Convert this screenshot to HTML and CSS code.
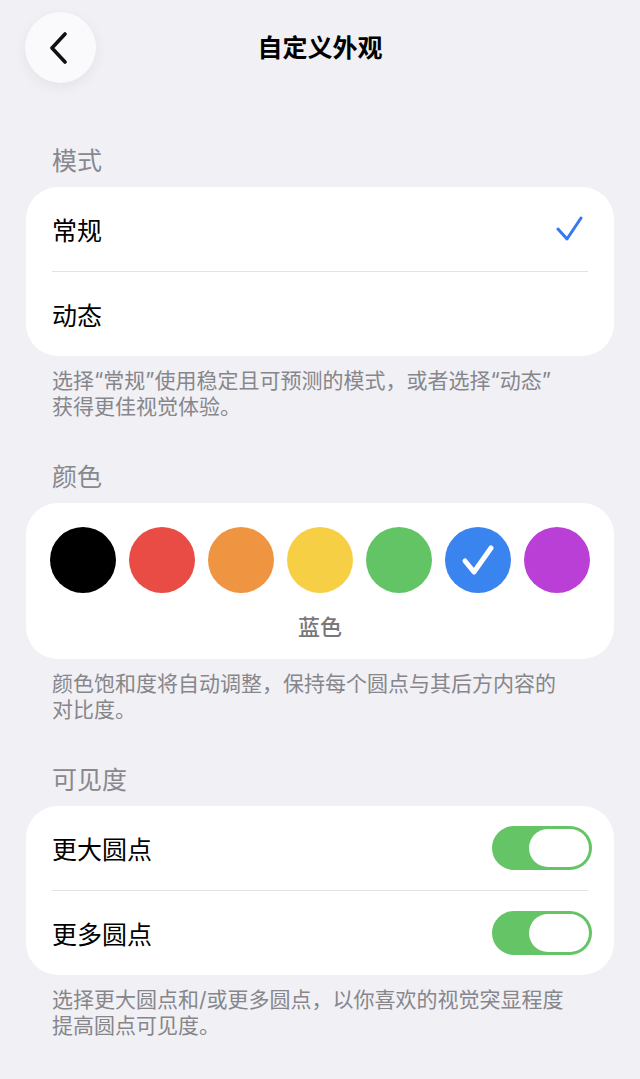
FILE: index.html
```html
<!DOCTYPE html>
<html lang="zh-CN">
<head>
  <meta charset="UTF-8">
  <title>自定义外观</title>
  <link rel="stylesheet" href="styles.css">
</head>
<body>

  <!-- Top bar -->
  <div class="nav">
    <button class="back" type="button" aria-label="返回">
      <svg width="20" height="32" viewBox="0 0 20 32">
        <path d="M16 2 L3 16 L16 30" fill="none" stroke="#111" stroke-width="3.6" stroke-linecap="round" stroke-linejoin="round"/>
      </svg>
    </button>
    <div class="title">自定义外观</div>
    <div></div>
  </div>

  <!-- Mode -->
  <div class="group">
    <div class="group-title">模式</div>
    <div class="card">
      <div class="row">
        <span class="label">常规</span>
        <svg class="check" width="28" height="26" viewBox="0 0 28 26">
          <path d="M2 13 L11 23 L25 2" fill="none" stroke="#3478f6" stroke-width="3" stroke-linecap="round" stroke-linejoin="round"/>
        </svg>
      </div>
      <div class="divider"></div>
      <div class="row">
        <span class="label">动态</span>
      </div>
    </div>
    <p class="footnote">选择“常规”使用稳定且可预测的模式，或者选择“动态”<br>获得更佳视觉体验。</p>
  </div>

  <!-- Colour -->
  <div class="group">
    <div class="group-title">颜色</div>
    <div class="card colors">
      <div class="swatches">
        <span class="dot black"></span>
        <span class="dot red"></span>
        <span class="dot orange"></span>
        <span class="dot yellow"></span>
        <span class="dot green"></span>
        <span class="dot blue selected">
          <svg width="34" height="32" viewBox="0 0 34 32">
            <path d="M4 17 L13 28 L30 4" fill="none" stroke="#fff" stroke-width="5" stroke-linecap="round" stroke-linejoin="round"/>
          </svg>
        </span>
        <span class="dot purple"></span>
      </div>
      <div class="color-name">蓝色</div>
    </div>
    <p class="footnote">颜色饱和度将自动调整，保持每个圆点与其后方内容的<br>对比度。</p>
  </div>

  <!-- Visibility -->
  <div class="group">
    <div class="group-title">可见度</div>
    <div class="card">
      <div class="row toggle-row">
        <span class="label">更大圆点</span>
        <span class="switch on"><span class="knob"></span></span>
      </div>
      <div class="divider"></div>
      <div class="row toggle-row">
        <span class="label">更多圆点</span>
        <span class="switch on"><span class="knob"></span></span>
      </div>
    </div>
    <p class="footnote">选择更大圆点和/或更多圆点，以你喜欢的视觉突显程度<br>提高圆点可见度。</p>
  </div>

</body>
</html>
```

FILE: styles.css
```css
body {
  margin: 0;
  background: #f0f0f5;
  font-family: "Inter", "Noto Sans CJK SC", sans-serif;
  color: #000;
}

.nav {
  display: grid;
  grid-template-columns: 71px 1fr 71px;
  align-items: center;
  padding: 12px 25px 0;
}
.back {
  width: 71px;
  height: 71px;
  border: none;
  border-radius: 50%;
  background: #fafafc;
  box-shadow: 0 4px 14px rgba(0, 0, 0, 0.06);
  display: flex;
  align-items: center;
  justify-content: center;
  padding: 0 4px 0 0;
}
.title {
  text-align: center;
  font-size: 25px;
  font-weight: 600;
  line-height: 30px;
}

.group {
  padding: 0 26px;
  margin-top: 42px;
}
.nav + .group {
  margin-top: 63px;
}
.group-title {
  font-size: 25px;
  line-height: 30px;
  color: #88888d;
  padding-left: 26px;
  margin-bottom: 11px;
}

.card {
  background: #fff;
  border-radius: 32px;
}
.row {
  display: flex;
  align-items: center;
  justify-content: space-between;
  height: 84px;
  padding: 0 22px 0 26px;
}
.label {
  font-size: 25px;
}
.check {
  margin-right: 8px;
}
.divider {
  height: 1px;
  margin: 0 26px;
  background: #e3e3e7;
}

.footnote {
  margin: 12px 0 0;
  padding-left: 26px;
  font-size: 21px;
  line-height: 26px;
  color: #86868b;
}

/* colour picker */
.colors {
  padding: 24px 24px 17px;
}
.swatches {
  display: flex;
  gap: 13px;
}
.dot {
  width: 66px;
  height: 66px;
  border-radius: 50%;
  display: flex;
  align-items: center;
  justify-content: center;
}
.black { background: #000; }
.red { background: #e94b45; }
.orange { background: #ef9441; }
.yellow { background: #f7cf45; }
.green { background: #63c466; }
.blue { background: #3a84f0; }
.purple { background: #b93fd7; }
.color-name {
  margin-top: 19px;
  text-align: center;
  font-size: 22px;
  font-weight: 500;
  line-height: 30px;
  color: #77777c;
}

/* switches */
.switch {
  width: 100px;
  height: 44px;
  border-radius: 22px;
  background: #e5e5ea;
  box-sizing: border-box;
  padding: 3px;
  display: flex;
}
.switch.on {
  background: #65c466;
  justify-content: flex-end;
}
.knob {
  width: 60px;
  height: 38px;
  border-radius: 19px;
  background: #fff;
}
```
